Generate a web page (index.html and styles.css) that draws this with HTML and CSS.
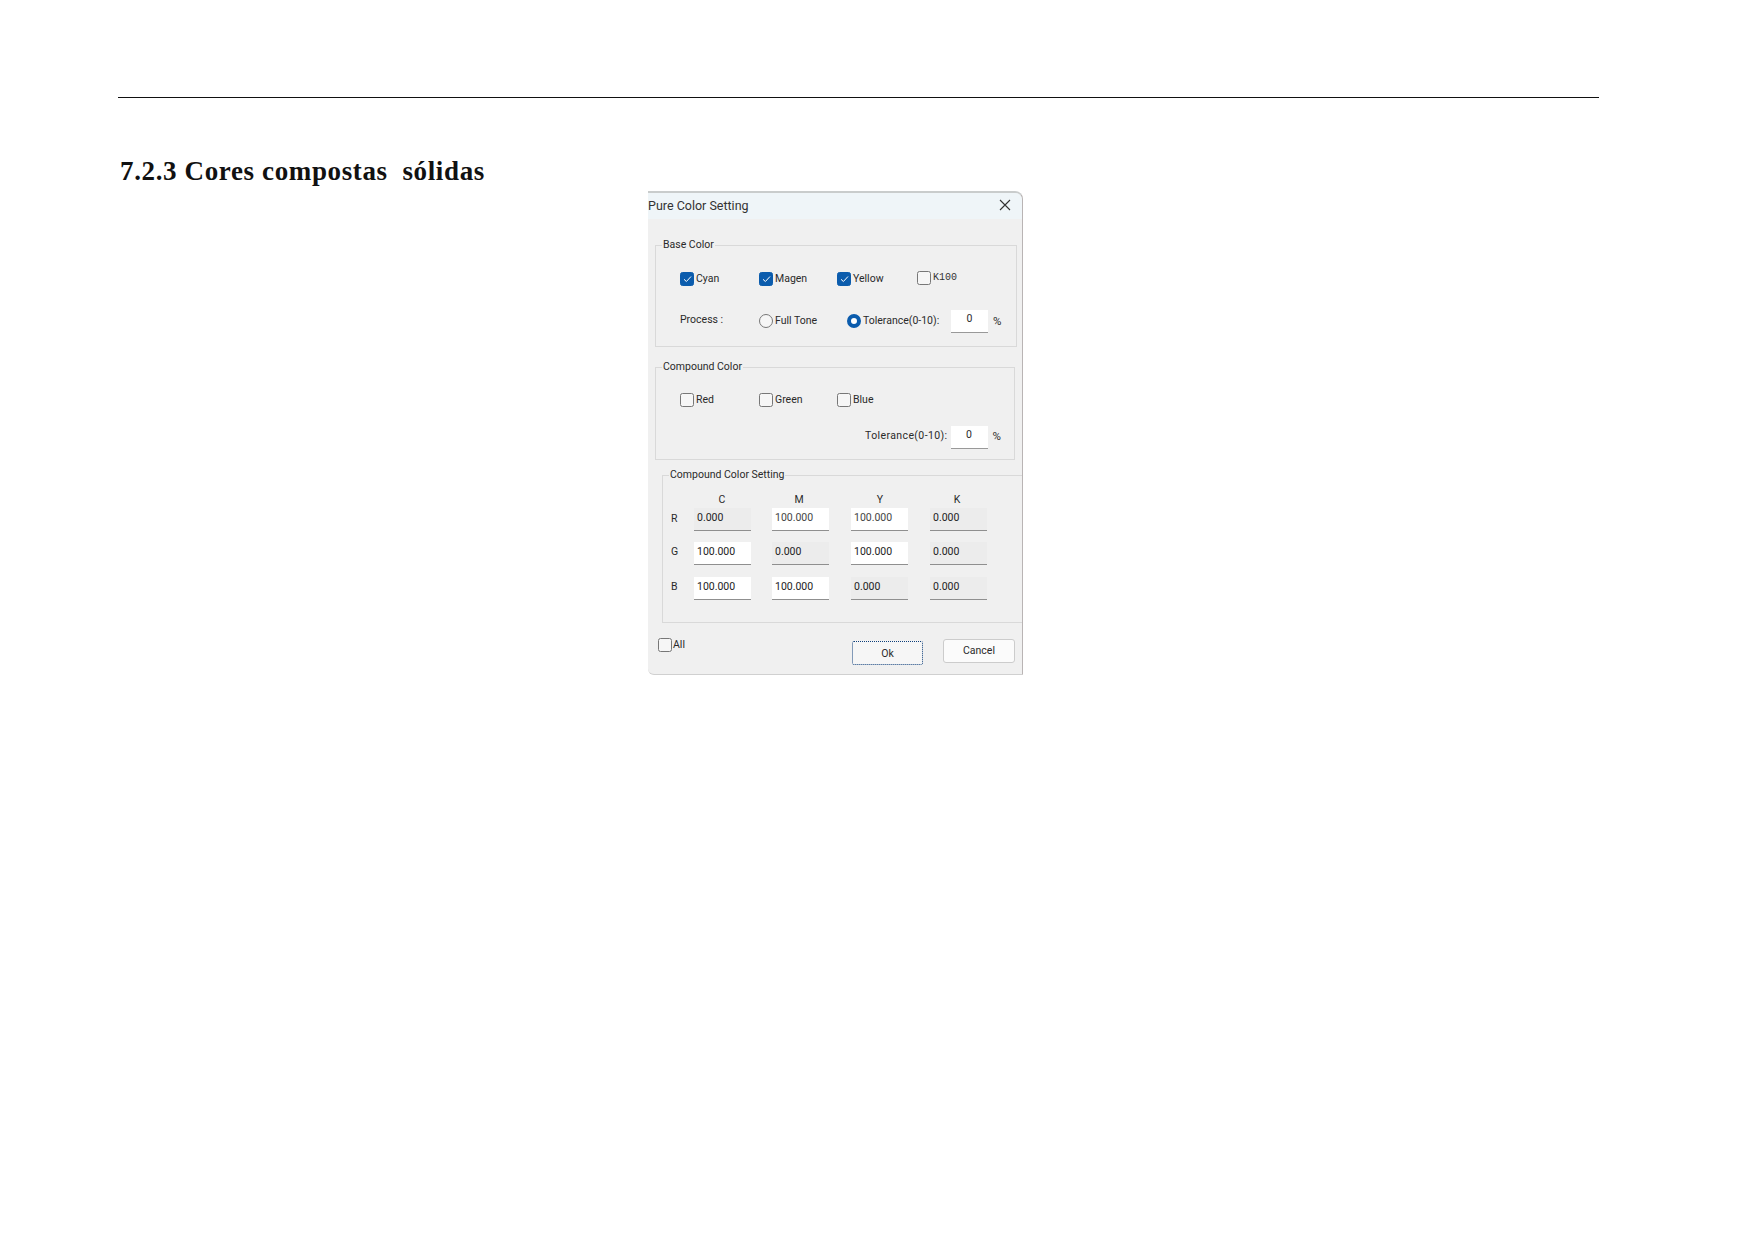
FILE: index.html
```html
<!DOCTYPE html>
<html lang="pt">
<head>
<meta charset="utf-8">
<title>7.2.3 Cores compostas sólidas</title>
<link rel="stylesheet" href="styles.css">
</head>
<body>
<div class="page">
  <div class="rule"></div>
  <h2 class="heading">7.2.3 Cores compostas  sólidas</h2>
  <div class="dialog">
    <div class="titlebar">
      <span class="title">Pure Color Setting</span>
      <svg class="close" width="12" height="12" viewBox="0 0 12 12"><path d="M1 1 11 11M11 1 1 11" stroke="#333" stroke-width="1.1" fill="none"/></svg>
    </div>

    <fieldset class="group base">
      <legend>Base Color</legend>
      <div class="row checks">
        <label class="opt c1"><span class="box on"><svg width="9" height="8" viewBox="0 0 9 8"><path d="M1 4.3 3.4 6.5 8 1.5" stroke="#fff" stroke-width="1" fill="none"/></svg></span>Cyan</label>
        <label class="opt c2"><span class="box on"><svg width="9" height="8" viewBox="0 0 9 8"><path d="M1 4.3 3.4 6.5 8 1.5" stroke="#fff" stroke-width="1" fill="none"/></svg></span>Magen</label>
        <label class="opt c3 tight"><span class="box on"><svg width="9" height="8" viewBox="0 0 9 8"><path d="M1 4.3 3.4 6.5 8 1.5" stroke="#fff" stroke-width="1" fill="none"/></svg></span>Yellow</label>
        <label class="opt raised tight"><span class="box"></span><span class="mono">K100</span></label>
      </div>
      <div class="row process">
        <span class="c1 raised-text">Process :</span>
        <label class="opt p2"><span class="radio"></span>Full Tone</label>
        <label class="opt p3"><span class="radio on"></span>Tolerance(0-10):</label>
        <span class="field short">0</span>
        <span class="pct">%</span>
      </div>
    </fieldset>

    <fieldset class="group compound">
      <legend>Compound Color</legend>
      <div class="row checks">
        <label class="opt c1"><span class="box"></span>Red</label>
        <label class="opt c2"><span class="box"></span>Green</label>
        <label class="opt c3 tight"><span class="box"></span>Blue</label>
      </div>
      <div class="row tolerance">
        <span class="tol-label">Tolerance(0-10):</span>
        <span class="field short">0</span>
        <span class="pct">%</span>
      </div>
    </fieldset>

    <fieldset class="group setting">
      <legend>Compound Color Setting</legend>
      <div class="matrix">
        <span class="head hc">C</span><span class="head hm">M</span><span class="head hy">Y</span><span class="head hk">K</span>
      </div>
      <div class="mrow r1">
        <span class="rowname">R</span>
        <span class="cell off">0.000</span><span class="cell light">100.000</span><span class="cell light">100.000</span><span class="cell off">0.000</span>
      </div>
      <div class="mrow r2">
        <span class="rowname">G</span>
        <span class="cell">100.000</span><span class="cell off">0.000</span><span class="cell">100.000</span><span class="cell off">0.000</span>
      </div>
      <div class="mrow r3">
        <span class="rowname">B</span>
        <span class="cell">100.000</span><span class="cell">100.000</span><span class="cell off">0.000</span><span class="cell off">0.000</span>
      </div>
    </fieldset>

    <div class="footer">
      <label class="opt all"><span class="box"></span>All</label>
      <div class="btn ok">Ok</div>
      <div class="btn cancel">Cancel</div>
    </div>
  </div>
</div>
</body>
</html>
```
FILE: styles.css
```css
* { box-sizing: border-box; }
html, body { margin: 0; padding: 0; background: #fff; }
.page { padding: 97px 0 0 118px; height: 1240px; overflow: hidden; }
.rule { width: 1481px; height: 1px; background: #111; }
.heading {
  margin: 59px 0 0 2px; height: 34px;
  font: bold 27px/28px "Liberation Serif", serif;
  letter-spacing: .63px; white-space: pre; color: #111;
}
.dialog {
  margin-left: 530px; width: 375px; height: 484px;
  background: #f0f0f0; border-radius: 0 8px 0 6px;
  border-top: 2px solid #c9cccc; border-right: 1px solid #b9b4b4;
  border-bottom: 1px solid #d0d0d0;
  font: 10.5px/14px Roboto, sans-serif; color: #2a2a2a;
}
.titlebar {
  height: 26px; background: #eff5f8; border-radius: 0 7px 0 0;
  display: flex; align-items: center; justify-content: space-between;
  padding: 0 11px 0 0;
}
.title { font: 12.5px/18px Roboto, sans-serif; color: #333; margin-top: -1px; }
.close { margin-top: -2px; }

.group { margin: 0; padding: 0; border: 1px solid #d9d9d9; min-width: 0; }
.group legend { padding: 0 1px; line-height: 14px; font-size: 10.5px; }
.base legend, .compound legend { margin-left: -18px; }
.base { margin: 19px 0 0 7px; width: 362px; height: 109px; padding: 19px 0 0 24px; }
.compound { margin: 13px 0 0 7px; width: 360px; height: 100px; padding: 18px 0 0 24px; }
.setting {
  margin: 8px 0 0 14px; width: 360px; height: 155px; border-right: 0;
  padding: 0 0 0 8px;
}
.setting legend { margin-left: -2px; }

.row { display: flex; align-items: center; }
.opt { display: flex; align-items: center; }
.checks { height: 16px; }
.c1 { width: 79px; }
.c2 { width: 78px; }
.c3 { width: 80px; }
.tight .box { margin-right: 2px; }
.raised { margin-top: -2px; }
.mono { font: 10px/14px "Liberation Mono", monospace; color: #333; }

.box {
  width: 14px; height: 14px; margin-right: 2px; flex: none;
  border: 1px solid #777; border-radius: 2.5px; background: #f6f6f6;
  display: flex; align-items: center; justify-content: center;
}
.box.on { background: #0b5cad; border-color: #0b5cad; }
.radio {
  width: 14px; height: 14px; margin-right: 2px; flex: none;
  border: 1px solid #777; border-radius: 50%; background: #f6f6f6;
}
.radio.on { border: 4px solid #0b5cad; background: #fff; }

.process { height: 24px; margin-top: 22px; }
.raised-text { margin-top: -2px; }
.p2 { width: 88px; }
.p3 { width: 104px; }
.field {
  background: #fff; border-bottom: 1px solid #999;
  display: flex; justify-content: center; padding-top: 2px;
}
.short { width: 37px; height: 23px; margin-top: 0; }
.tolerance .short { margin-top: 2px; }
.pct { margin-left: 5px; font-size: 11.5px; }

.tolerance { height: 24px; margin-top: 16px; justify-content: flex-end; padding-right: 13px; }
.tol-label { margin-right: 3px; letter-spacing: .4px; }

.matrix { display: flex; height: 14px; margin-top: 11px; }
.head { text-align: center; width: 20px; }
.hc { margin-left: 41px; }
.hm { margin-left: 57px; }
.hy { margin-left: 61px; }
.hk { margin-left: 57px; }

.mrow { display: flex; align-items: center; height: 23px; }
.r1 { margin-top: 1px; }
.r2 { margin-top: 11px; }
.r3 { margin-top: 12px; }
.rowname { width: 23px; font-size: 10.5px; padding-bottom: 2px; }
.r2 .rowname, .r3 .rowname { padding-bottom: 4px; }
.cell {
  width: 57px; height: 23px; margin-right: 21px; padding: 3px 0 0 3px;
  background: #fff; border-bottom: 1px solid #8f8f8f;
  font: 10.5px/14px Roboto, sans-serif; color: #222;
}
.cell:nth-child(3), .cell:nth-child(4) { margin-right: 22px; }
.cell.off { background: #ececec; }
.cell.light { color: #444; }
.footer { display: flex; margin-top: 15px; height: 28px; }
.all { margin-left: 10px; align-self: flex-start; }
.all .box { margin-right: 1px; }
.btn {
  width: 71px; height: 24px; flex: none; display: flex; align-items: center; justify-content: center;
  border-radius: 3px; background: #fbfbfb; border: 1px solid #ccc;
}
.ok { margin-left: 167px; margin-top: 3px; border: 1px dotted #0e3f7a; border-radius: 2px; padding-top: 2px; background: #f6f6f6; }
.cancel { margin-left: 20px; margin-top: 1px; width: 72px; }
```
